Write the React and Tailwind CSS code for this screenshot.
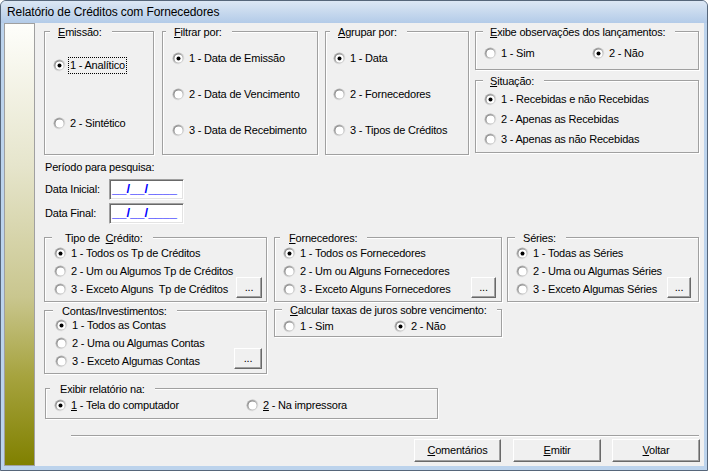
import React from "react";

function Radio({ checked, children, className = "", labelClass = "" }) {
  return (
    <div className={`flex items-center gap-[4px] h-[13px] ${className}`}>
      <svg width="13" height="13" viewBox="0 0 13 13" className="shrink-0">
        <defs>
          <linearGradient id="radioOuter" x1="0" y1="0" x2="1" y2="1">
            <stop offset="0" stopColor="#9c9c9c" />
            <stop offset="1" stopColor="#ffffff" />
          </linearGradient>
          <linearGradient id="radioInner" x1="0" y1="0" x2="1" y2="1">
            <stop offset="0" stopColor="#6a6a6a" />
            <stop offset="1" stopColor="#e2e2e2" />
          </linearGradient>
        </defs>
        <circle cx="6.5" cy="6.5" r="6" fill="url(#radioOuter)" />
        <circle cx="6.5" cy="6.5" r="5" fill="url(#radioInner)" />
        <circle cx="6.5" cy="6.5" r="4" fill="#ffffff" />
        {checked && <circle cx="6.5" cy="6.5" r="2" fill="#000000" />}
      </svg>
      <span className={`whitespace-pre ${labelClass}`}>{children}</span>
    </div>
  );
}

function Group({ title, labelClass, className = "", children }) {
  return (
    <div
      className={`relative border border-[#a0a0a0] shadow-[inset_1px_1px_0_#fff,1px_1px_0_#fff] ${className}`}
    >
      <span
        className={`absolute -top-[6px] bg-[#f0f0f0] pr-[10px] leading-[13px] whitespace-pre ${labelClass}`}
      >
        {title}
      </span>
      {children}
    </div>
  );
}

function Btn({ children, className = "" }) {
  return (
    <button
      className={`flex items-center justify-center bg-[#f0f0f0] border border-t-white border-l-white border-r-[#696969] border-b-[#696969] shadow-[inset_-1px_-1px_0_#a0a0a0] text-[11px] leading-[13px] text-black ${className}`}
    >
      {children}
    </button>
  );
}

function DateBox() {
  return (
    <div className="w-[75px] h-[21px] bg-white border border-t-[#a0a0a0] border-l-[#a0a0a0] border-r-white border-b-white shadow-[inset_1px_1px_0_#696969,inset_-1px_-1px_0_#e3e3e3] pl-[2px] pb-[3px] flex items-center text-[#0000ff] text-[13px] font-bold leading-none tracking-normal">
      __/__/____
    </div>
  );
}

export default function App() {
  return (
    <div className="w-[708px] h-[471px] font-['Liberation_Sans',Arial,sans-serif] text-[11px] leading-[13px] tracking-[-0.2px] text-black">
      <div className="w-full h-full flex flex-col border border-[#56667a] rounded-t-[6px] bg-[#bcd3ec] overflow-hidden">
        {/* title bar */}
        <div className="h-[22px] shrink-0 flex items-center pl-[6px] text-[12px] tracking-[-0.1px] bg-[linear-gradient(to_bottom,#dce7f4,#b3cbe8)]">
          Relatório de Créditos com Fornecedores
        </div>

        <div className="flex mx-[3px] h-[443px] shrink-0 bg-[#f0f0f0]">
          <div className="w-[31px] shrink-0 border border-[#a0a0a0] bg-[linear-gradient(to_bottom,#fefefb,#e6e5cc_32%,#c9c68e_62%,#a6a33e_80%,#808000)]" />

          <div className="flex-1 pl-[9px] pr-[4px] pt-[8px] flex flex-col">
            {/* row 1 */}
            <div className="flex items-start">
              <Group
                title={<><u>E</u>missão:</>}
                labelClass="left-[5px] pl-[8px]"
                className="w-[110px] h-[124px]"
              >
                <div className="flex flex-col pl-[8px] pt-[27px] gap-[45px]">
                  <Radio checked labelClass="border border-dotted border-black px-[1px] py-[1px] -ml-[2px]">
                    1 - Analítico
                  </Radio>
                  <Radio>2 - Sintético</Radio>
                </div>
              </Group>

              <Group
                title={<><u>F</u>iltrar por:</>}
                labelClass="left-[3px] pl-[8px]"
                className="ml-[8px] w-[156px] h-[124px]"
              >
                <div className="flex flex-col pl-[9px] pt-[20px] gap-[23px]">
                  <Radio checked>1 - Data de Emissão</Radio>
                  <Radio>2 - Data de Vencimento</Radio>
                  <Radio>3 - Data de Recebimento</Radio>
                </div>
              </Group>

              <Group
                title={<><u>A</u>grupar por:</>}
                labelClass="left-[4px] pl-[8px]"
                className="ml-[7px] w-[144px] h-[124px]"
              >
                <div className="flex flex-col pl-[7px] pt-[20px] gap-[23px]">
                  <Radio checked>1 - Data</Radio>
                  <Radio>2 - Fornecedores</Radio>
                  <Radio>3 - Tipos de Créditos</Radio>
                </div>
              </Group>

              <div className="ml-[6px] w-[224px] flex flex-col">
                <Group
                  title={<><u>E</u>xibe observações dos lançamentos:</>}
                  labelClass="left-[7px] pl-[7px]"
                  className="h-[39px]"
                >
                  <div className="flex pl-[8px] pt-[15px]">
                    <Radio className="w-[108px]">1 - Sim</Radio>
                    <Radio checked>2 - Não</Radio>
                  </div>
                </Group>
                <Group
                  title={<><u>S</u>ituação:</>}
                  labelClass="left-[7px] pl-[7px]"
                  className="mt-[10px] h-[73px]"
                >
                  <div className="flex flex-col pl-[8px] pt-[12px] gap-[7px]">
                    <Radio checked>1 - Recebidas e não Recebidas</Radio>
                    <Radio>2 - Apenas as Recebidas</Radio>
                    <Radio>3 - Apenas as não Recebidas</Radio>
                  </div>
                </Group>
              </div>
            </div>

            {/* period */}
            <div className="mt-[6px] ml-[1px]">Período para pesquisa:</div>
            <div className="mt-[5px] ml-[1px] flex items-center">
              <span className="w-[64px]">Data Inicial:</span>
              <DateBox />
            </div>
            <div className="mt-[3px] ml-[1px] flex items-center">
              <span className="w-[64px]">Data Final:</span>
              <DateBox />
            </div>

            {/* row 3 */}
            <div className="mt-[13px] flex items-start">
              <div className="w-[223px] flex flex-col">
                <Group
                  title={<>Tipo de  <u>C</u>rédito:</>}
                  labelClass="left-[7px] pl-[13px]"
                  className="h-[65px]"
                >
                  <div className="flex flex-col pl-[9px] pt-[9px] gap-[5px]">
                    <Radio checked>1 - Todos os Tp de Créditos</Radio>
                    <Radio>2 - Um ou Algumos Tp de Créditos</Radio>
                    <div className="flex items-center justify-between pr-[4px]">
                      <Radio>3 - Exceto Alguns  Tp de Créditos</Radio>
                      <Btn className="w-[26px] h-[21px] -mt-[9px] -mb-[4px] shrink-0">...</Btn>
                    </div>
                  </div>
                </Group>
                <Group
                  title="Contas/Investimentos:"
                  labelClass="left-[8px] pl-[9px]"
                  className="mt-[8px] h-[64px]"
                >
                  <div className="flex flex-col pl-[10px] pt-[8px] gap-[5px]">
                    <Radio checked>1 - Todos as Contas</Radio>
                    <Radio>2 - Uma ou Algumas Contas</Radio>
                    <div className="flex items-center justify-between pr-[4px]">
                      <Radio>3 - Exceto Algumas Contas</Radio>
                      <Btn className="w-[28px] h-[21px] -mt-[10px] -mb-[3px] shrink-0">...</Btn>
                    </div>
                  </div>
                </Group>
              </div>

              <div className="ml-[7px] w-[228px] flex flex-col">
                <Group
                  title={<><u>F</u>ornecedores:</>}
                  labelClass="left-[5px] pl-[9px]"
                  className="h-[65px]"
                >
                  <div className="flex flex-col pl-[8px] pt-[9px] gap-[5px]">
                    <Radio checked>1 - Todos os Fornecedores</Radio>
                    <Radio>2 - Um ou Alguns Fornecedores</Radio>
                    <div className="flex items-center justify-between pr-[5px]">
                      <Radio>3 - Exceto Alguns Fornecedores</Radio>
                      <Btn className="w-[25px] h-[21px] -mt-[9px] -mb-[4px] shrink-0">...</Btn>
                    </div>
                  </div>
                </Group>
                <Group
                  title={<><u>C</u>alcular taxas de juros sobre vencimento:</>}
                  labelClass="left-[7px] pl-[8px]"
                  className="mt-[7px] h-[28px]"
                >
                  <div className="flex pl-[8px] pt-[10px]">
                    <Radio className="w-[111px]">1 - Sim</Radio>
                    <Radio checked>2 - Não</Radio>
                  </div>
                </Group>
              </div>

              <Group
                title="Séries:"
                labelClass="left-[7px] pl-[8px]"
                className="ml-[5px] w-[192px] h-[65px]"
              >
                <div className="flex flex-col pl-[8px] pt-[9px] gap-[5px]">
                  <Radio checked>1 - Todas as Séries</Radio>
                  <Radio>2 - Uma ou Algumas Séries</Radio>
                  <div className="flex items-center justify-between pr-[7px]">
                    <Radio>3 - Exceto Algumas Séries</Radio>
                    <Btn className="w-[24px] h-[21px] -mt-[9px] -mb-[4px] shrink-0">...</Btn>
                  </div>
                </div>
              </Group>
            </div>

            {/* output target */}
            <Group
              title="Exibir relatório na:"
              labelClass="left-[4px] pl-[10px]"
              className="mt-[14px] ml-[1px] w-[393px] h-[31px]"
            >
              <div className="flex pl-[8px] pt-[10px]">
                <Radio checked className="w-[192px]">
                  <u>1</u> - Tela do computador
                </Radio>
                <Radio>
                  <u>2</u> - Na impressora
                </Radio>
              </div>
            </Group>

            <div className="mt-[16px] ml-[27px] w-[628px] h-[2px] border-t border-b border-t-[#a0a0a0] border-b-white" />

            <div className="mt-[2px] flex justify-end">
              <Btn className="w-[87px] h-[23px]">
                <span><u>C</u>omentários</span>
              </Btn>
              <Btn className="ml-[12px] w-[88px] h-[23px]">
                <span><u>E</u>mitir</span>
              </Btn>
              <Btn className="ml-[11px] w-[88px] h-[23px]">
                <span><u>V</u>oltar</span>
              </Btn>
            </div>
          </div>
        </div>
      </div>
    </div>
  );
}
